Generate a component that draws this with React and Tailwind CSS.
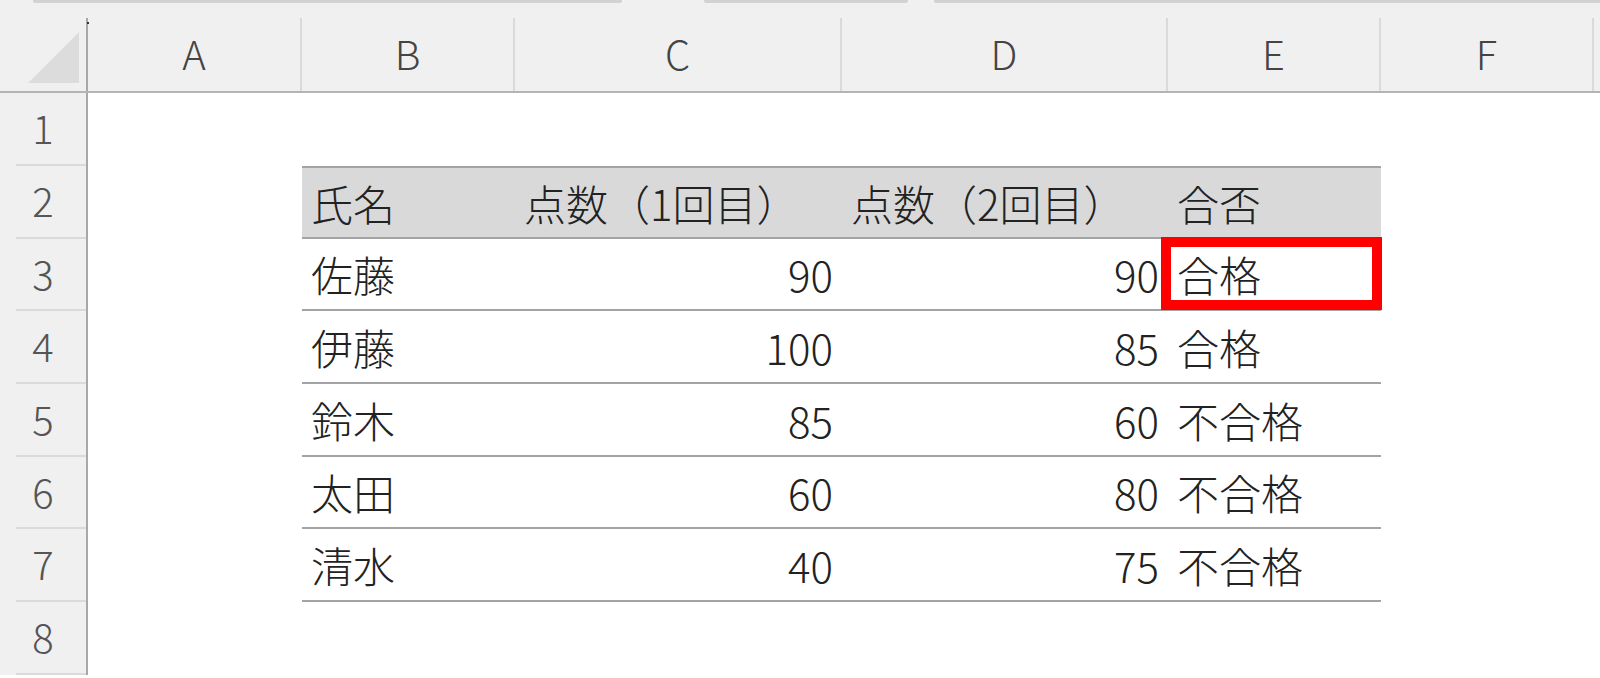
import React from "react";

const letters = ["A", "B", "C", "D", "E", "F", ""];
const rowHeights = ["h-[73px]", "h-[73px]", "h-[72px]", "h-[73px]", "h-[73px]", "h-[72px]", "h-[73px]", "h-[73px]"];

const data = [
  ["佐藤", "90", "90", "合格"],
  ["伊藤", "100", "85", "合格"],
  ["鈴木", "85", "60", "不合格"],
  ["太田", "60", "80", "不合格"],
  ["清水", "40", "75", "不合格"],
];

const gridCols = "grid grid-cols-[88px_214px_213px_327px_326px_213px_213px_1fr]";

function Cell({ children, align = "left", header = false, top = false, line = false, extra = null }) {
  return (
    <div
      className={
        "relative flex items-center text-[42px] font-light leading-none text-[#222222] " +
        (align === "right" ? "justify-end pr-[9px] " : "justify-start pl-[9px] ") +
        (header ? "bg-[#d9d9d9] " : "") +
        (top ? "border-t-2 border-t-[#a3a3a3] " : "") +
        (line ? "border-b-2 border-b-[#a3a3a3] " : "")
      }
    >
      <span className="whitespace-nowrap">{children}</span>
      {extra}
    </div>
  );
}

function RowHeader({ n }) {
  return (
    <div className="flex flex-col border-r-2 border-r-[#a8a8a8] bg-[#f0f0f0]">
      <div className="flex-1 flex items-center justify-center pb-[3px] text-[40px] font-light leading-none text-[#555555]">
        {n}
      </div>
      <div className="ml-[16px] h-[2px] bg-[#dadada]" />
    </div>
  );
}

export default function App() {
  const rows = [];
  for (let i = 0; i < 8; i++) {
    const r = i + 1;
    let cells;
    if (r === 2) {
      cells = (
        <>
          <div />
          <Cell header top line>氏名</Cell>
          <Cell header top line>点数（1回目）</Cell>
          <Cell header top line>点数（2回目）</Cell>
          <Cell header top line>合否</Cell>
          <div />
          <div />
        </>
      );
    } else if (r >= 3 && r <= 7) {
      const d = data[r - 3];
      cells = (
        <>
          <div />
          <Cell line>{d[0]}</Cell>
          <Cell align="right" line>{d[1]}</Cell>
          <Cell align="right" line>{d[2]}</Cell>
          <Cell
            line
            extra={
              r === 3 ? (
                <div className="pointer-events-none absolute -left-[7px] -top-[2px] -right-[1px] -bottom-[1px] border-[10px] border-[#ff0000]" />
              ) : null
            }
          >
            {d[3]}
          </Cell>
          <div />
          <div />
        </>
      );
    } else {
      cells = (
        <>
          <div />
          <div />
          <div />
          <div />
          <div />
          <div />
          <div />
        </>
      );
    }
    rows.push(
      <div key={r} className={gridCols + " " + rowHeights[i]}>
        <RowHeader n={r} />
        {cells}
      </div>
    );
  }

  return (
    <div className="relative w-[1600px] h-[678px] overflow-hidden bg-white font-['Noto_Sans_CJK_JP','Noto_Sans',sans-serif]">
      {/* top strip */}
      <div className="relative h-[18px] bg-[#f0f0f0]">
        <div className="flex h-[3px]">
          <div className="w-[33px]" />
          <div className="w-[589px] rounded-b-[2px] bg-[#d2d2d2]" />
          <div className="w-[82px]" />
          <div className="w-[204px] rounded-b-[2px] bg-[#d2d2d2]" />
          <div className="w-[26px]" />
          <div className="flex-1 rounded-bl-[2px] bg-[#d2d2d2]" />
        </div>
        <div className="absolute left-[87px] top-[22px] z-10 h-[2px] w-[2px] bg-[#333333]" />
      </div>
      {/* column header */}
      <div className={gridCols + " h-[75px] bg-[#f0f0f0] border-b-2 border-b-[#b4b4b4]"}>
        <div className="relative border-r-2 border-r-[#a8a8a8]">
          <svg className="absolute left-0 top-0" width="88" height="73" viewBox="0 0 88 73">
            <polygon points="28,65 79,65 79,14" fill="#dcdcdc" />
          </svg>
        </div>
        {letters.map((l, i) => (
          <div
            key={i}
            className={
              "flex items-center justify-center pb-[3px] text-[40px] font-light leading-none text-[#444444] " +
              (l ? "border-r-2 border-r-[#dadada]" : "")
            }
          >
            {l}
          </div>
        ))}
      </div>
      {rows}
    </div>
  );
}
